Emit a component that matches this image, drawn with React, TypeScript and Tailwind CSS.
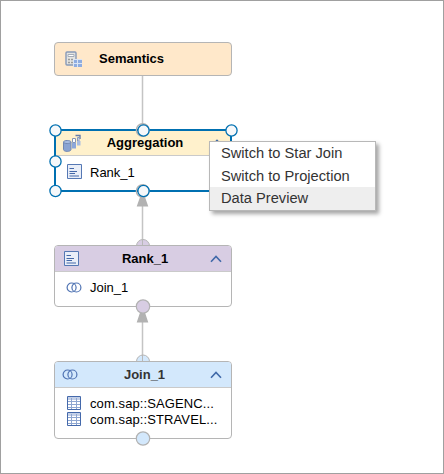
import type { ReactNode } from "react";

const RankIcon = () => (
  <svg width="16" height="16" viewBox="0 0 16 16" fill="none" stroke="#5578b4">
    <path d="M1.5 .5H15.5V14.5H1.5Z" fill="#e9eef8" />
    <path d="M3.5 4.5H8M3.5 7.5H11M3.5 9.5H9M3.5 12H13" stroke="#4468a8" strokeWidth="1.2" />
  </svg>
);

const JoinIcon = () => (
  <svg width="16" height="12" viewBox="0 0 16 12" fill="none" stroke="#4f73b3" strokeWidth="1.2">
    <circle cx="5.6" cy="5.5" r="4.5" />
    <circle cx="10.4" cy="5.5" r="4.5" />
  </svg>
);

const TableIcon = () => (
  <svg className="relative -top-px" width="14" height="15" viewBox="0 0 14 15" fill="none">
    <path d="M.5 1H13.5V14H.5Z" fill="#fff" />
    <path d="M1 2.5H13" stroke="#c3d0e8" strokeWidth="3" />
    <path d="M4.5 2V14M9.5 2V14M1 5.5H13M1 8.5H13M1 11.5H13" stroke="#8ea6d0" />
    <path d="M.5 .5H13.5V13.5H.5Z" stroke="#4469ab" />
  </svg>
);

const SemanticsIcon = () => (
  <svg width="18" height="17" viewBox="0 0 18 17" fill="none">
    <rect x="1" y="1" width="10" height="13" rx="1" fill="#e4e4e1" stroke="#8799b8" strokeWidth="1.4" />
    <path d="M3 3.5H9V5.5H3Z" fill="#fff" stroke="#a5adb9" />
    <path d="M3 8.5H5M6 8.5H8M3 11.5H5M6 11.5H8" stroke="#9c9b9a" strokeWidth="1.5" />
    <path d="M8 8H17V16H8Z" fill="#dbe5f5" />
    <path d="M9 9H12V12H9ZM13 9H17V12H13ZM9 13H12V16H9ZM13 13H17V16H13Z" fill="#8eace0" />
  </svg>
);

const AggregationIcon = () => (
  <svg width="19" height="19" viewBox="0 0 19 19" fill="none">
    <path d="M1.5 8V15.5C1.5 18 9 18 9 15.5V8" fill="#8aa3d2" stroke="#7187b2" />
    <path d="M1.5 8C1.5 6 9 6 9 8C9 10 1.5 10 1.5 8Z" fill="#a7bce3" stroke="#7187b2" />
    <path d="M10.5 4.5H13.5V8.5H10.5Z" fill="#fff" stroke="#8496b8" />
    <path d="M10 9H14V14.5H10Z" fill="#8ca7da" />
    <path d="M13.5 1.5H18V5" stroke="#667ca8" strokeWidth="1.4" />
    <path d="M15.5 3.5H17V7H15.5Z" fill="#fff" stroke="#8799bd" />
    <path d="M15 7H18.5V11.5H15Z" fill="#a9bce0" />
  </svg>
);

const Chevron = () => (
  <svg className="ml-auto" width="12" height="8" viewBox="0 0 12 8" fill="none">
    <path d="M1 6.8L6 1.4L11 6.8" stroke="#4069a9" strokeWidth="1.6" />
  </svg>
);

interface NodeProps {
  frame: string;
  header: string;
  icon: ReactNode;
  title: string;
  children: ReactNode;
}

function DiagramNode({ frame, header, icon, title, children }: NodeProps) {
  return (
    <section className={`absolute left-[54px] w-[178px] overflow-hidden bg-white ${frame}`}>
      <header className={`grid grid-cols-[24px_1fr_24px] items-center border-b border-[#cacaca] text-center font-bold ${header}`}>
        <span>{icon}</span>
        <h2 className="pl-[5px]">{title}</h2>
        <span><Chevron /></span>
      </header>
      {children}
    </section>
  );
}

export default function App() {
  return (
    <main className="relative h-[474px] w-[444px] overflow-hidden border border-[#a0a0a0] bg-white font-['Liberation_Sans',Arial,sans-serif] text-[13px] leading-4 text-black">
      <div className="absolute -left-px -top-px h-[474px] w-[444px]">
        <svg className="absolute inset-0" width="444" height="474" fill="none">
          <path d="M142.5 76V130M142.5 204V246M142.5 321V362" stroke="#c4c4c4" strokeWidth="1.5" />
          <circle cx="143" cy="246" r="6.5" fill="#d8cde3" stroke="#b5b5b5" />
          <circle cx="143" cy="361.5" r="6.5" fill="#d3e8fc" stroke="#b5b5b5" />
          <path d="M142.5 239V246M142.5 355V362" stroke="#b8b8b8" />
          <path d="M142.5 190L148.3 206.5H136.7ZM142.5 305L148.3 322.5H136.7Z" fill="#b2b2b2" />
        </svg>

        <section className="absolute left-[54px] top-[42px] flex h-[34px] w-[178px] items-center rounded border border-[#b5b5b5] bg-[#ffe8ca] pl-[10px] font-bold">
          <SemanticsIcon />
          <h2 className="ml-4">Semantics</h2>
        </section>

        <DiagramNode
          frame="top-[129px] h-[63px] border-2 border-[#0070b1]"
          header="h-[25px] bg-[#fff1cc] pl-[6px] pr-[7px]"
          icon={<AggregationIcon />}
          title="Aggregation"
        >
          <div className="flex items-start gap-[6px] pl-[10px] pt-2">
            <RankIcon />
            <span className="ml-[2px] mt-px">Rank_1</span>
          </div>
        </DiagramNode>

        <DiagramNode
          frame="top-[245px] h-[62px] rounded border border-[#b5b5b5]"
          header="h-[26px] bg-[#d8cde3] pl-[8px] pr-[9px]"
          icon={<RankIcon />}
          title="Rank_1"
        >
          <div className="flex items-center gap-2 pl-[11px] pt-[8px]">
            <JoinIcon />
            <span>Join_1</span>
          </div>
        </DiagramNode>

        <DiagramNode
          frame="top-[361px] h-[78px] rounded border border-[#b5b5b5]"
          header="h-[26px] bg-[#d3e8fc] pl-[7px] pr-[9px] text-[#333]"
          icon={<JoinIcon />}
          title="Join_1"
        >
          <div className="flex flex-col pl-3 pt-2 tracking-[0.1px]">
            <div className="flex h-4 items-center gap-[9px]"><TableIcon /><span>com.sap::SAGENC...</span></div>
            <div className="flex h-4 items-center gap-[9px]"><TableIcon /><span>com.sap::STRAVEL...</span></div>
          </div>
        </DiagramNode>

        <svg className="absolute inset-0" width="444" height="474" fill="none">
          <g fill="#d8cde3" stroke="#b2b2b2" strokeWidth="1.2">
            <circle cx="143" cy="306.5" r="6.7" />
            <circle cx="143" cy="438.5" r="6.7" fill="#d3e8fc" />
          </g>
          <g stroke="#b2b2b2" strokeWidth="1.5">
            <circle cx="142.7" cy="130" r="6.3" />
            <circle cx="142.7" cy="191" r="6.3" />
          </g>
          <g fill="#f6f8fa" stroke="#0070b1" strokeWidth="1.3">
            <circle cx="55.5" cy="130.5" r="5.6" />
            <circle cx="143.5" cy="130.5" r="5.6" />
            <circle cx="231.5" cy="130.5" r="5.6" />
            <circle cx="55.5" cy="161.5" r="5.6" />
            <circle cx="55.5" cy="191" r="5.6" />
            <circle cx="143.5" cy="191" r="5.6" />
          </g>
        </svg>

        <menu className="absolute left-[209px] top-[141px] flex h-[70px] w-[167px] flex-col border border-[#b8b8b8] bg-white text-[14.67px] text-[#333] shadow-[3px_3px_4px_rgba(0,0,0,0.35)]">
          <li className="flex h-[23px] items-center pb-[2px] pl-[11px]">Switch to Star Join</li>
          <li className="flex h-[22px] items-center pb-px pl-[11px]">Switch to Projection</li>
          <li className="flex h-[23px] items-center bg-[#eeeeee] pb-px pl-[11px]">Data Preview</li>
        </menu>
      </div>
    </main>
  );
}
